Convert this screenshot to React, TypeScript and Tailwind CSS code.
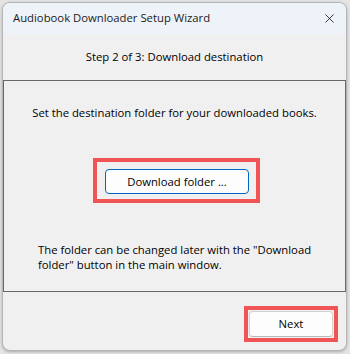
import { X } from "lucide-react";

export default function App() {
    return (
        <div
            className="w-[350px] h-[354px] bg-[#e4e4e4] pl-[2px] pt-[2px] pr-[3px] pb-[3px] text-[11.3px] text-black"
            style={{ fontFamily: '"Segoe UI", "Open Sans", sans-serif' }}
        >
            <div className="h-full flex flex-col rounded-lg border border-[#b5b5b5] bg-[#f0f0f0] overflow-hidden shadow-[0_1px_3px_rgba(0,0,0,0.25)]">
                {/* title bar */}
                <div className="h-[31px] shrink-0 flex items-center justify-between bg-[#eef3f9] pl-[10px] pr-[9px]">
                    <span className="text-[#1a1a1a]">Audiobook Downloader Setup Wizard</span>
                    <X size={15} strokeWidth={1.2} className="text-black" />
                </div>

                <div className="h-[46px] shrink-0 flex items-center justify-center">
                    Step 2 of 3: Download destination
                </div>

                {/* content panel */}
                <div className="h-[212px] shrink-0 border border-[#686868] flex flex-col items-center">
                    <p className="mt-[24px] leading-[15px]">Set the destination folder for your downloaded books.</p>

                    <div className="mt-[38px] ml-[4px] border-4 border-[#f05454] pl-[8px] pr-[7px] pt-[7px] pb-[5px]">
                        <button className="w-[144px] h-[25px] rounded-[4px] border border-[#0067c0] bg-[#fdfdfd] leading-none">
                            Download folder ...
                        </button>
                    </div>

                    <p className="self-start mt-[39px] ml-[34px] leading-[15px]">
                        The folder can be changed later with the "Download
                        <br />
                        folder" button in the main window.
                    </p>
                </div>

                {/* footer */}
                <div className="flex-1 flex justify-end items-start pt-[14px] pr-[8px]">
                    <div className="border-4 border-[#f05454] p-[1px]">
                        <button className="w-[84px] h-[26px] rounded-[4px] border border-[#d0d0d0] border-b-[#b8b8b8] bg-[#fdfdfd] leading-none">
                            Next
                        </button>
                    </div>
                </div>
            </div>
        </div>
    );
}
